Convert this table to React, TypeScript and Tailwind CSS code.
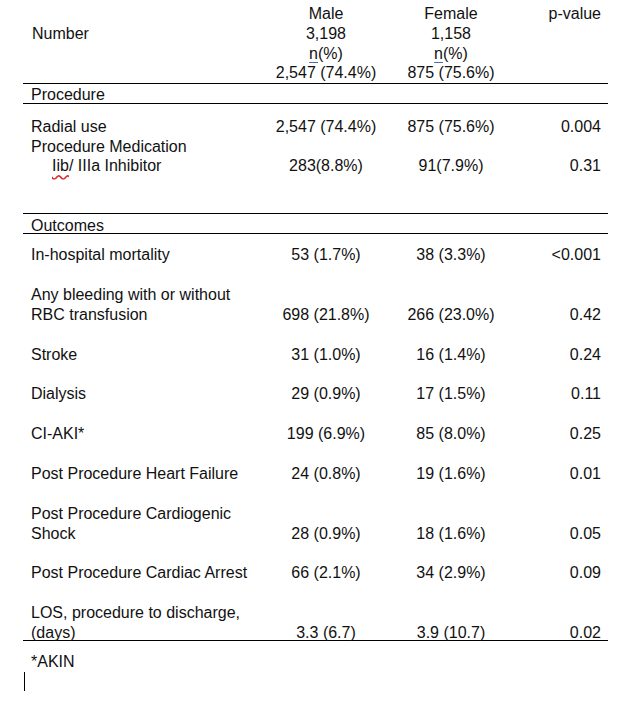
type Row = { label: string[]; male: string; female: string; p: string };

const outcomes: Row[] = [
  { label: ['In-hospital mortality'], male: '53 (1.7%)', female: '38 (3.3%)', p: '<0.001' },
  { label: ['Any bleeding with or without', 'RBC transfusion'], male: '698 (21.8%)', female: '266 (23.0%)', p: '0.42' },
  { label: ['Stroke'], male: '31 (1.0%)', female: '16 (1.4%)', p: '0.24' },
  { label: ['Dialysis'], male: '29 (0.9%)', female: '17 (1.5%)', p: '0.11' },
  { label: ['CI-AKI*'], male: '199 (6.9%)', female: '85 (8.0%)', p: '0.25' },
  { label: ['Post Procedure Heart Failure'], male: '24 (0.8%)', female: '19 (1.6%)', p: '0.01' },
  { label: ['Post Procedure Cardiogenic', 'Shock'], male: '28 (0.9%)', female: '18 (1.6%)', p: '0.05' },
  { label: ['Post Procedure Cardiac Arrest'], male: '66 (2.1%)', female: '34 (2.9%)', p: '0.09' },
  { label: ['LOS, procedure to discharge,', '(days)'], male: '3.3 (6.7)', female: '3.9 (10.7)', p: '0.02' },
];

const cols = 'grid grid-cols-[235px_120px_130px_85px] items-end';

function Cells({ male, female, p }: { male: string; female: string; p: string }) {
  return (
    <>
      <div className="text-center">{male}</div>
      <div className="text-center">{female}</div>
      <div className="text-right">{p}</div>
    </>
  );
}

export default function App() {
  return (
    <div className="w-[639px] h-[708px] bg-white text-[#111] text-[16px] leading-[20px] font-['Liberation_Sans',Arial,sans-serif] overflow-hidden">
      <div className="ml-[23px] w-[585px]">
        {/* header */}
        <div className="pt-[4px] pl-[8px] pr-[7px] border-b border-black leading-[19.75px]">
          <div className={cols}>
            <div />
            <div className="text-center">Male</div>
            <div className="text-center">Female</div>
            <div className="text-right">p-value</div>
          </div>
          <div className={cols}>
            <div className="pl-[1px]">Number</div>
            <div className="text-center">3,198</div>
            <div className="text-center">1,158</div>
            <div />
          </div>
          <div className={cols}>
            <div />
            <div className="text-center">
              <span className="underline decoration-[#4a6fa5] underline-offset-[3px]">n</span>(%)
            </div>
            <div className="text-center">
              <span className="underline decoration-[#4a6fa5] underline-offset-[3px]">n</span>(%)
            </div>
            <div />
          </div>
          <div className={cols}>
            <div />
            <div className="text-center">2,547 (74.4%)</div>
            <div className="text-center">875 (75.6%)</div>
            <div />
          </div>
        </div>

        <div className="pl-[8px] h-[20px] pt-[1px] leading-[19px] border-b border-black">Procedure</div>

        <div className="pt-[13px] pl-[8px] pr-[7px]">
          <div className={cols}>
            <div>Radial use</div>
            <Cells male="2,547 (74.4%)" female="875 (75.6%)" p="0.004" />
          </div>
          <div className="leading-[19px]">Procedure Medication</div>
          <div className={cols}>
            <div className="pl-[21px]">
              <span className="underline decoration-wavy decoration-[#e02828] underline-offset-[3px]">Iib</span>/ IIIa Inhibitor
            </div>
            <Cells male="283(8.8%)" female="91(7.9%)" p="0.31" />
          </div>
        </div>

        <div className="mt-[37px] border-t border-black" />
        <div className="pl-[8px] h-[20px] pt-[3px] leading-[17px] border-b border-black">Outcomes</div>

        <div className="pt-[11px] pl-[8px] pr-[7px] flex flex-col gap-[19.9px] leading-[19.9px]">
          {outcomes.map((r) => (
            <div key={r.label[0]} className={cols}>
              <div>
                {r.label.map((l) => (
                  <div key={l}>{l}</div>
                ))}
              </div>
              <Cells male={r.male} female={r.female} p={r.p} />
            </div>
          ))}
        </div>
        <div className="-mt-[3px] border-t border-black" />

        <div className="mt-[11px] pl-[8px]">*AKIN</div>
        <div className="ml-[1px] w-px h-[19px] bg-black" />
      </div>
    </div>
  );
}
